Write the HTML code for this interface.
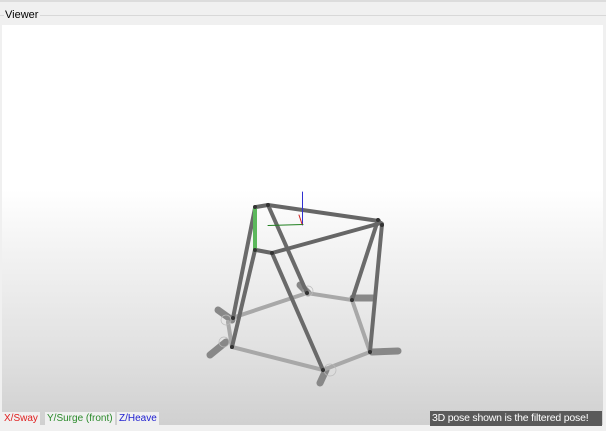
<!DOCTYPE html>
<html><head><style>
body{margin:0;width:606px;height:431px;background:#f0f0f0;position:relative;overflow:hidden;font-family:"Liberation Sans",Arial,sans-serif}
.top{position:absolute;left:0;top:0;width:606px;height:2px;background:#dcdcdc}
.legend{position:absolute;left:0;top:15px;width:606px;height:1px;background:#d8d8d8}
.title{position:absolute;left:4px;top:8px;font-size:11px;color:#000;background:#f0f0f0;padding:0 2px 0 1px;line-height:14px}
.view{position:absolute;left:2px;top:25px;width:601px;height:400px;background:linear-gradient(#fff 0px,#fff 165px,#f2f2f2 230px,#e2e2e2 320px,#d0d0d0 400px)}
.lab{position:absolute;top:412px;height:14px;line-height:14px;font-size:10px;background:#f0f0f0;padding:0 2px;white-space:nowrap}
</style></head><body>
<div class="top"></div>
<div class="legend"></div>
<div class="title">Viewer</div>
<div class="view"></div>
<svg style="position:absolute;left:0;top:0" width="606" height="431">
<g stroke-linecap="round" fill="none">
<g stroke="#888" stroke-width="7">
<line x1="218" y1="310" x2="232" y2="320"/>
<line x1="210" y1="355" x2="226" y2="342"/>
<line x1="300" y1="285" x2="308" y2="293"/>
<line x1="353" y1="298" x2="373" y2="298"/>
<line x1="372" y1="352" x2="398" y2="351"/>
<line x1="320" y1="383" x2="326" y2="370"/>
</g>
<g stroke="#a8a8a8" stroke-width="4">
<polyline points="232,318 307,293 352,300 370,352 323,370 232,347 228,322"/>
</g>
<g stroke="#bbb" stroke-width="0.7">
<circle cx="308" cy="291" r="5"/><circle cx="330" cy="370" r="6"/><circle cx="226" cy="320" r="5"/><circle cx="224" cy="342" r="5"/>
</g>
<g stroke="#6a6a6a" stroke-width="4">
<line x1="255" y1="208" x2="233" y2="318"/>
<line x1="255" y1="250" x2="232" y2="347"/>
<line x1="268" y1="205" x2="307" y2="293"/>
<line x1="272" y1="253" x2="323" y2="370"/>
<line x1="378" y1="220" x2="352" y2="300"/>
<line x1="382" y1="224" x2="370" y2="352"/>
</g>
<g stroke="#666" stroke-width="4">
<line x1="256" y1="207" x2="268" y2="205"/>
<line x1="268" y1="205" x2="379" y2="221"/>
<line x1="272" y1="253" x2="381" y2="223"/>
<line x1="256" y1="250" x2="272" y2="253"/>
</g>
<line x1="255" y1="208" x2="255" y2="250" stroke="#5cb85c" stroke-width="4"/>
<g fill="#333" stroke="none">
<circle cx="255" cy="207" r="2"/><circle cx="268" cy="205" r="2"/><circle cx="378" cy="220" r="2"/><circle cx="382" cy="225" r="2"/><circle cx="272" cy="253" r="2"/><circle cx="255" cy="250" r="2"/>
<circle cx="233" cy="318" r="2"/><circle cx="232" cy="347" r="2"/><circle cx="307" cy="293" r="2"/><circle cx="352" cy="300" r="2"/><circle cx="370" cy="352" r="2"/><circle cx="323" cy="370" r="2"/>
</g>
<line x1="302.5" y1="192" x2="302.5" y2="225" stroke="#3030d0" stroke-width="1"/>
<line x1="268" y1="225.5" x2="303" y2="224.5" stroke="#208020" stroke-width="1"/>
<line x1="299" y1="215" x2="302" y2="224" stroke="#d02020" stroke-width="1"/>
</g>
</svg>
<div class="lab" style="left:2px;color:#e02020">X/Sway</div>
<div class="lab" style="left:45px;color:#2a8a2a">Y/Surge (front)</div>
<div class="lab" style="left:117px;color:#2020d0">Z/Heave</div>
<div class="lab" style="left:430px;width:168px;background:#5a5a5a;color:#fff;font-size:10.5px;letter-spacing:-0.2px;top:411px;height:15px;line-height:15px">3D pose shown is the filtered pose!</div>
</body></html>
